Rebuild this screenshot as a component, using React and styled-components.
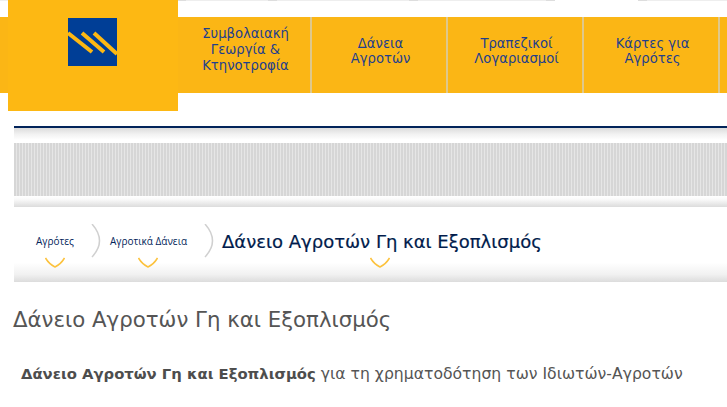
import React from "react";
import styled, { createGlobalStyle } from "styled-components";

const GlobalStyle = createGlobalStyle`
    html, body {
        margin: 0;
        padding: 0;
        background: #fff;
        overflow: hidden;
    }
`;
const Page = styled.div`
    position: relative;
    width: 727px;
    height: 407px;
    overflow: hidden;
    font-family: "DejaVu Sans", Verdana, sans-serif;
    box-sizing: border-box;
`;
const TopStrip = styled.div`
    display: flex;
    height: 1px;
    margin-bottom: 16px;
`;
const StripPart = styled.div`
    flex: 0 0 ${(props) => props.w}px;
    background: ${(props) => props.c};
`;
const LogoBlock = styled.div`
    position: absolute;
    top: 0;
    left: 8px;
    width: 170px;
    height: 111px;
    background: #fdb813;
    padding: 18px 0 0 60px;
    box-sizing: border-box;
    z-index: 2;
`;
const Nav = styled.nav`
    display: flex;
    height: 76px;
    background: #fbb615;
    padding-left: 178px;
`;
const NavItem = styled.div`
    flex: 0 0 ${(props) => props.w}px;
    box-sizing: border-box;
    border-right: 2px solid #dfc88c;
    color: #1f3f8c;
    font-size: 13.2px;
    line-height: ${(props) => props.lh}px;
    text-align: center;
    padding: ${(props) => props.pt}px 0 0 3px;
`;
const Rule = styled.div`
    margin: 33px 0 0 14px;
    height: 2px;
    background: #02245a;
`;
const RuleShade = styled.div`
    margin-left: 14px;
    height: 12px;
    background: linear-gradient(#dcdcdc, #f1f1f1 50%, #fff);
`;
const Banner = styled.div`
    margin: 3px 0 0 14px;
    height: 53px;
    background: repeating-linear-gradient(90deg, #d6d6d6 0 2px, #e6e6e6 2px 3px);
`;
const BannerShade = styled.div`
    margin-left: 14px;
    height: 11px;
    background: linear-gradient(#fff, #fafafa 30%, #dcdcdc);
`;
const Crumbs = styled.div`
    position: relative;
    margin-left: 14px;
    height: 75px;
    display: flex;
    align-items: flex-start;
    background: linear-gradient(#fff 0, #fff 74%, #f1f1f1 90%, #dcdcdc 100%);
`;
const Crumb = styled.div`
    flex: 0 0 ${(props) => props.w}px;
    padding-left: ${(props) => props.pl}px;
    box-sizing: border-box;
    color: #02245a;
    font-size: 10px;
    font-family: "Open Sans", sans-serif;
    line-height: 14px;
    margin-top: 27px;
    white-space: nowrap;
`;
const CurrentCrumb = styled(Crumb)`
    font-family: "DejaVu Sans", sans-serif;
    font-size: 18px;
    line-height: 24px;
    margin-top: 23px;
    color: #011c4c;
    -webkit-text-stroke: 0.2px #011c4c;
`;
const SeparatorIcon = styled.svg`
    position: absolute;
    top: 17px;
    left: ${(props) => props.x}px;
`;
const SmileIcon = styled.svg`
    position: absolute;
    left: ${(props) => props.x}px;
    top: 50px;
`;
const Heading = styled.h1`
    margin: 24px 0 0 13px;
    font-size: 21.3px;
    line-height: 28px;
    font-weight: 400;
    color: #555;
`;
const Lead = styled.p`
    margin: 30px 0 0 21px;
    font-size: 15.65px;
    line-height: 20px;
    color: #555;
    white-space: nowrap;
    & b {
        font-size: 14.8px;
        color: #4d4d4d;
    }
`;

const Logo = () => (
    <svg width="49" height="48" viewBox="0 0 49 48" style={{ display: "block" }}>
        <rect width="49" height="48" fill="#003e96" />
        <path d="M0 15L24 34M14 15L36 34M26 15L49 36" stroke="#fdb813" strokeWidth="4" fill="none" />
    </svg>
);

const Smile = ({ x }) => (
    <SmileIcon x={x} width="20" height="12" viewBox="0 0 20 12">
        <path d="M0.5 1Q4 7 10 10Q16 7 19.5 1" stroke="#fcc23d" strokeWidth="1.5" fill="none" />
    </SmileIcon>
);

const Separator = ({ x }) => (
    <SeparatorIcon x={x} width="12" height="34" viewBox="0 0 12 34">
        <path d="M1 0Q16 17 1 33" stroke="#d0d0d0" strokeWidth="1.5" fill="none" />
    </SeparatorIcon>
);

const strip = [
    [8, "#eee"], [170, "#fff"], [8, "#ddd"], [82, "#eee"], [9, "#ddd"], [132, "#eee"],
    [9, "#ddd"], [128, "#eee"], [9, "#ddd"], [83, "#fff"], [9, "#ddd"], [80, "#eee"],
];

export default function App() {
    return (
        <Page>
            <GlobalStyle />
            <TopStrip>
                {strip.map(([w, c], i) => <StripPart key={i} w={w} c={c} />)}
            </TopStrip>
            <LogoBlock>
                <Logo />
            </LogoBlock>
            <Nav>
                <NavItem w={134} pt={9} lh={16}>Συμβολαιακή<br />Γεωργία &amp;<br />Κτηνοτροφία</NavItem>
                <NavItem w={136} pt={19} lh={15}>Δάνεια<br />Αγροτών</NavItem>
                <NavItem w={136} pt={19} lh={15}>Τραπεζικοί<br />Λογαριασμοί</NavItem>
                <NavItem w={136} pt={19} lh={15}>Κάρτες για<br />Αγρότες</NavItem>
            </Nav>
            <Rule />
            <RuleShade />
            <Banner />
            <BannerShade />
            <Crumbs>
                <Crumb w={75} pl={22}>Αγρότες</Crumb>
                <Crumb w={115} pl={21}>Αγροτικά Δάνεια</Crumb>
                <CurrentCrumb w={400} pl={18}>Δάνειο Αγροτών Γη και Εξοπλισμός</CurrentCrumb>
                <Separator x={77} />
                <Separator x={190} />
                <Smile x={31} />
                <Smile x={124} />
                <Smile x={356} />
            </Crumbs>
            <Heading>Δάνειο Αγροτών Γη και Εξοπλισμός</Heading>
            <Lead><b>Δάνειο Αγροτών Γη και Εξοπλισμός</b> για τη χρηματοδότηση των Ιδιωτών-Αγροτών</Lead>
        </Page>
    );
}
